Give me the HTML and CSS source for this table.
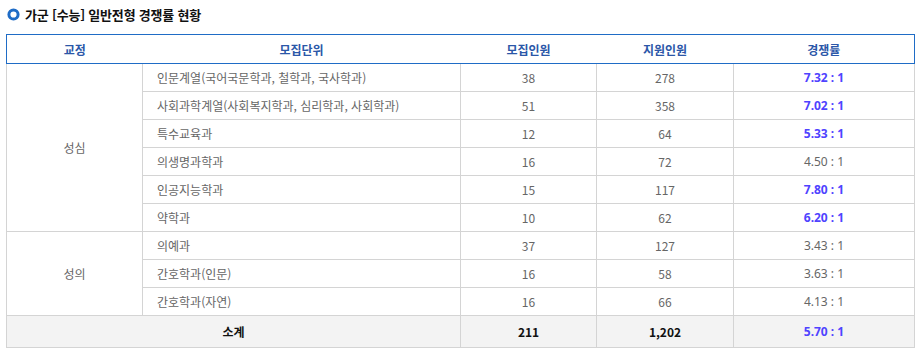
FILE: index.html
```html
<!DOCTYPE html>
<html lang="ko">
<head>
<meta charset="utf-8">
<link rel="stylesheet" href="styles.css">
</head>
<body>
<div class="wrap">
  <h3 class="title">
    <svg class="dot" width="13" height="13" viewBox="0 0 13 13"><circle cx="6.5" cy="6.5" r="4.6" fill="none" stroke="#1f6cc6" stroke-width="3"/></svg>
    <span>가군 [수능] 일반전형 경쟁률 현황</span>
  </h3>
  <table class="rate">
    <colgroup>
      <col class="c1"><col class="c2"><col class="c3"><col class="c4"><col class="c5">
    </colgroup>
    <thead>
      <tr><th>교정</th><th>모집단위</th><th>모집인원</th><th>지원인원</th><th>경쟁률</th></tr>
    </thead>
    <tbody>
      <tr><td rowspan="6" class="campus">성심</td><td class="unit">인문계열(국어국문학과, 철학과, 국사학과)</td><td>38</td><td>278</td><td class="hi">7.32 : 1</td></tr>
      <tr><td class="unit">사회과학계열(사회복지학과, 심리학과, 사회학과)</td><td>51</td><td>358</td><td class="hi">7.02 : 1</td></tr>
      <tr><td class="unit">특수교육과</td><td>12</td><td>64</td><td class="hi">5.33 : 1</td></tr>
      <tr><td class="unit">의생명과학과</td><td>16</td><td>72</td><td>4.50 : 1</td></tr>
      <tr><td class="unit">인공지능학과</td><td>15</td><td>117</td><td class="hi">7.80 : 1</td></tr>
      <tr><td class="unit">약학과</td><td>10</td><td>62</td><td class="hi">6.20 : 1</td></tr>
      <tr><td rowspan="3" class="campus">성의</td><td class="unit">의예과</td><td>37</td><td>127</td><td>3.43 : 1</td></tr>
      <tr><td class="unit">간호학과(인문)</td><td>16</td><td>58</td><td>3.63 : 1</td></tr>
      <tr><td class="unit">간호학과(자연)</td><td>16</td><td>66</td><td>4.13 : 1</td></tr>
      <tr class="total"><td colspan="2">소계</td><td>211</td><td>1,202</td><td class="hi">5.70 : 1</td></tr>
    </tbody>
  </table>
</div>
</body>
</html>
```
FILE: styles.css
```css
html, body {
  margin: 0;
  padding: 0;
  background: #fff;
}
body {
  font-family: "Noto Sans CJK KR", "Noto Sans", sans-serif;
  font-size: 12px;
  color: #666;
}
.wrap {
  padding: 7px 10px 0 6px;
}
.title {
  margin: 0 0 12px 1px;
  display: flex;
  align-items: center;
  gap: 5px;
  font-size: 13px;
  font-weight: 700;
  color: #111;
  height: 15px;
  line-height: 15px;
  letter-spacing: -0.2px;
}
.dot {
  flex: none;
}
.rate {
  width: 908px;
  border-collapse: collapse;
  table-layout: fixed;
}
.c1 { width: 136px; }
.c2 { width: 318px; }
.c3 { width: 136px; }
.c4 { width: 137px; }
.c5 { width: 181px; }
.rate th {
  height: 28px;
  padding: 0;
  font-weight: 700;
  color: #2b57a8;
  font-size: 12px;
  border-top: 1px solid #1f6cc6;
  border-bottom: 1px solid #1f6cc6;
}
.rate th:first-child { border-left: 1px solid #1f6cc6; }
.rate th:last-child { border-right: 1px solid #1f6cc6; }
.rate td {
  height: 27px;
  padding: 0;
  text-align: center;
  border: 1px solid #d4d4d4;
  line-height: 16px;
}
.rate thead + tbody tr:first-child td { border-top: none; height: 27px; }
.rate td.unit {
  text-align: left;
  padding-left: 14px;
}
.rate td.hi,
.rate td:last-child {
  font-family: "Noto Sans", "Noto Sans CJK KR", sans-serif;
}
.rate td.hi {
  color: #4f43ff;
  font-weight: 700;
}
.rate tr.total td {
  background: #f3f3f3;
  height: 31px;
  color: #111;
  font-weight: 700;
}
.rate tr.total td.hi {
  color: #4f43ff;
}
```
